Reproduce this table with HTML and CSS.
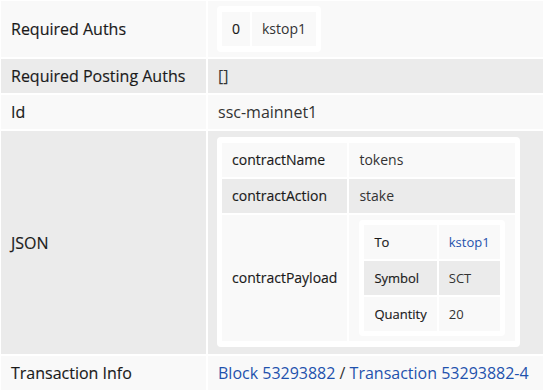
FILE: index.html
```html
<!DOCTYPE html>
<html>
<head>
  <title>Transaction Details</title>
  <link rel="stylesheet" href="styles.css">
</head>
<body>
  <table class="details">
    <tr>
      <th>Required Auths</th>
      <td class="nested compact">
        <div class="box">
          <table class="sub">
            <tr><th>0</th><td>kstop1</td></tr>
          </table>
        </div>
      </td>
    </tr>
    <tr>
      <th>Required Posting Auths</th>
      <td>[]</td>
    </tr>
    <tr>
      <th>Id</th>
      <td>ssc-mainnet1</td>
    </tr>
    <tr>
      <th>JSON</th>
      <td class="nested">
        <div class="box">
          <table class="sub">
            <tr><th>contractName</th><td>tokens</td></tr>
            <tr><th>contractAction</th><td>stake</td></tr>
            <tr>
              <th>contractPayload</th>
              <td class="nested">
                <div class="box inner">
                  <table class="sub small">
                    <tr><th>To</th><td><a href="#">kstop1</a></td></tr>
                    <tr><th>Symbol</th><td>SCT</td></tr>
                    <tr><th>Quantity</th><td>20</td></tr>
                  </table>
                </div>
              </td>
            </tr>
          </table>
        </div>
      </td>
    </tr>
    <tr>
      <th>Transaction Info</th>
      <td><a href="#">Block 53293882</a> / <a href="#">Transaction 53293882-4</a></td>
    </tr>
  </table>
</body>
</html>
```

FILE: styles.css
```css
body { font-family: "Open Sans", Arial, sans-serif; margin: 0; padding: 0; color: #333; background: #fff; }
a { color: #1f52ad; text-decoration: none; }

table { border-collapse: collapse; }
th, td { border: 2px solid #fff; text-align: left; vertical-align: middle; }
th { font-weight: normal; color: #1a1a1a; -webkit-text-stroke: 0.15px #1a1a1a; }
tr:nth-child(odd) > th, tr:nth-child(odd) > td { background: #f9f9f9; }
tr:nth-child(even) > th, tr:nth-child(even) > td { background: #ebebeb; }

.details { width: calc(100% + 2px); margin: -1px 0 0 -1px; font-size: 16px; line-height: 22px; }
.details > tbody > tr > th { width: 185px; padding: 6px 10px; }
.details > tbody > tr > td { padding: 6px 10px; }
.details > tbody > tr > td.nested { padding: 6px 10px 7px 9px; }
.details > tbody > tr > td.compact { padding: 5px 10px 5px 9px; }

.box { width: fit-content; background: #fff; border-radius: 4px; padding: 4px 3px; }
.box.inner { padding: 3px; }

.sub { font-size: 14px; line-height: 20px; }
.sub.small { font-size: 13px; }
.sub th, .sub td { padding: 7px 10px; }
.sub td.nested { padding: 5px 10px; }
```
